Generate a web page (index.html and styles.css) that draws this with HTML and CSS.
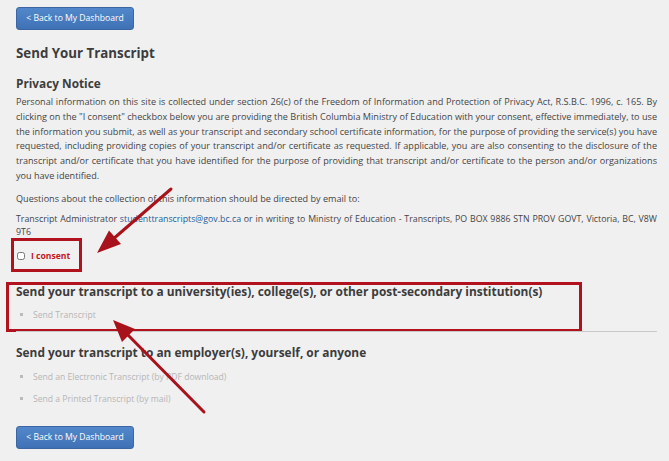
FILE: index.html
```html
<!DOCTYPE html>
<html>
<head>
<meta charset="utf-8">
<link rel="stylesheet" href="styles.css">
</head>
<body>
<div class="page">
  <a class="btn" href="#">&lt; Back to My Dashboard</a>
  <h1 class="title">Send Your Transcript</h1>
  <h2 class="subtitle">Privacy Notice</h2>
  <p class="para">Personal information on this site is collected under section 26(c) of the Freedom of Information and Protection of Privacy Act, R.S.B.C. 1996, c. 165. By clicking on the "I consent" checkbox below you are providing the British Columbia Ministry of Education with your consent, effective immediately, to use the information you submit, as well as your transcript and secondary school certificate information, for the purpose of providing the service(s) you have requested, including providing copies of your transcript and/or certificate as requested. If applicable, you are also consenting to the disclosure of the transcript and/or certificate that you have identified for the purpose of providing that transcript and/or certificate to the person and/or organizations you have identified.</p>
  <p class="para small">Questions about the collection of this information should be directed by email to:</p>
  <p class="para small tight"><span class="line">Transcript Administrator <a class="link" href="#">studenttranscripts@gov.bc.ca</a> or in writing to Ministry of Education - Transcripts, PO BOX 9886 STN PROV GOVT, Victoria, BC, V8W</span><span class="line">9T6</span></p>
  <div class="consent-box">
    <label class="consent"><input type="checkbox" class="check"> I consent</label>
  </div>
  <div class="section-box">
    <h3 class="section-title">Send your transcript to a university(ies), college(s), or other post-secondary institution(s)</h3>
    <ul class="links">
      <li>Send Transcript</li>
    </ul>
  </div>
  <hr class="rule">
  <h3 class="section-title plain">Send your transcript to an employer(s), yourself, or anyone</h3>
  <ul class="links">
    <li>Send an Electronic Transcript (by PDF download)</li>
    <li>Send a Printed Transcript (by mail)</li>
  </ul>
  <a class="btn bottom" href="#">&lt; Back to My Dashboard</a>
</div>
<svg class="arrows" width="669" height="461" viewBox="0 0 669 461">
  <g stroke="#a8121b" stroke-width="3" fill="#a8121b" stroke-linecap="round">
    <line x1="171" y1="189" x2="112" y2="240"/>
    <polygon points="97,253 121,244 109,230.5" stroke="none"/>
    <line x1="204" y1="412" x2="126" y2="333"/>
    <polygon points="113,320 135,329 122,342" stroke="none"/>
  </g>
</svg>
</body>
</html>
```
FILE: styles.css
```css
html, body {
  margin: 0;
  padding: 0;
  background: #f0f0f1;
}
body {
  font-family: "Open Sans", "Liberation Sans", sans-serif;
  color: #444;
  position: relative;
  width: 669px;
  height: 461px;
  overflow: hidden;
}
.page {
  padding: 7px 12px 0 16px;
  display: flex;
  flex-direction: column;
  align-items: flex-start;
}
.btn {
  display: inline-block;
  box-sizing: border-box;
  width: 118px;
  height: 23px;
  line-height: 21px;
  text-align: center;
  color: #fff;
  font-size: 8.6px;
  text-decoration: none;
  border-radius: 3px;
  background: linear-gradient(#5288cb, #3f71b5);
  border: 1px solid #3a67a3;
}
.title {
  margin: 13px 0 0;
  font-size: 13.3px;
  font-weight: 700;
  color: #3c3c3c;
  line-height: 20px;
}
.subtitle {
  margin: 11px 0 0;
  font-size: 11.8px;
  font-weight: 700;
  color: #3c3c3c;
  line-height: 18px;
}
.para {
  margin: 3px 0 0;
  font-size: 9.1px;
  line-height: 14.8px;
  text-align: justify;
  width: 641px;
  color: #444;
}
.small {
  margin-top: 8px;
}
.tight {
  margin-top: 6px;
  font-size: 8.8px;
  line-height: 13.5px;
}
.line {
  display: block;
  text-align: justify;
  text-align-last: justify;
}
.line:last-child {
  text-align-last: left;
}
.link {
  color: #1d5d99;
  text-decoration: none;
}
.consent-box {
  margin: -2px 0 0 -5px;
  width: 71px;
  height: 34px;
  box-sizing: border-box;
  border: 3px solid #b1121e;
  display: flex;
  align-items: flex-end;
  padding: 0 0 7px 3px;
}
.consent {
  display: flex;
  align-items: center;
  gap: 6px;
  color: #c2181f;
  font-size: 8.6px;
  font-weight: 700;
}
.check {
  margin: 0;
  width: 8px;
  height: 8px;
}
.section-box {
  margin: 10px 0 0 -10px;
  width: 576px;
  height: 50px;
  box-sizing: border-box;
  border: 3px solid #b1121e;
  padding: 0 0 0 7px;
}
.section-title {
  margin: 0;
  font-size: 11.9px;
  font-weight: 700;
  color: #3c3c3c;
  line-height: 16px;
}
.section-box .section-title {
  line-height: 12px;
}
.section-box .links {
  margin-top: 7px;
}
.plain {
  margin-top: 12px;
}
.links {
  margin: 6px 0 0;
  padding: 0 0 0 17px;
  list-style: square;
  color: #b5b5b5;
  font-size: 8.6px;
  line-height: 22px;
}
.links li::marker {
  color: #bbb;
}
.rule {
  align-self: stretch;
  margin: -1px 0 0 0;
  border: 0;
  border-top: 1px solid #c8c8c8;
  width: 641px;
}
.bottom {
  margin-top: 16px;
}
.arrows {
  position: absolute;
  left: 0;
  top: 0;
  pointer-events: none;
}
```
